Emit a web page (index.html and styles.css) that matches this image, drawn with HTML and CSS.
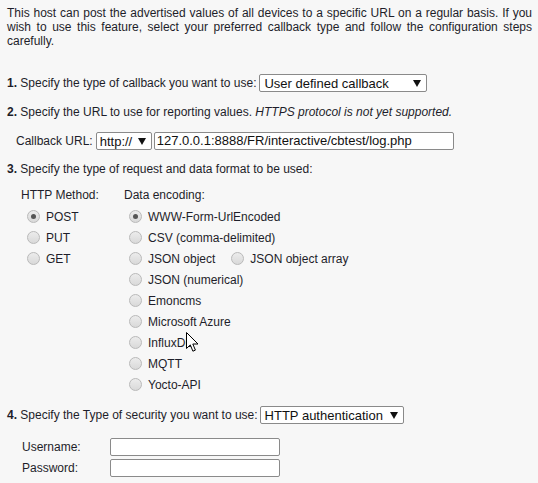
FILE: index.html
```html
<!DOCTYPE html>
<html>
<head>
<meta charset="utf-8">
<link rel="stylesheet" href="styles.css">
</head>
<body>
<div class="page">
  <p class="intro">This host can post the advertised values of all devices to a specific URL on a regular basis. If you wish to use this feature, select your preferred callback type and follow the configuration steps carefully.</p>

  <div class="row step1"><b>1.</b>&nbsp;Specify the type of callback you want to use:<span class="select sel-type"><span>User defined callback</span><svg class="arrow" width="8" height="7" viewBox="0 0 8 7"><polygon points="0,0 8,0 4,7" fill="#111"/></svg></span></div>

  <div class="line step2"><b>2.</b> Specify the URL to use for reporting values. <i>HTTPS protocol is not yet supported.</i></div>

  <div class="row url-row">Callback URL:<span class="select sel-proto"><span>http://</span><svg class="arrow" width="8" height="7" viewBox="0 0 8 7"><polygon points="0,0 8,0 4,7" fill="#111"/></svg></span><span class="textbox url-box">127.0.0.1:8888/FR/interactive/cbtest/log.php</span></div>

  <div class="line step3"><b>3.</b> Specify the type of request and data format to be used:</div>

  <div class="formats">
    <div class="col-method">
      <div class="col-head">HTTP Method:</div>
      <div class="radios">
        <label class="opt"><span class="radio on"></span>POST</label>
        <label class="opt"><span class="radio"></span>PUT</label>
        <label class="opt"><span class="radio"></span>GET</label>
      </div>
    </div>
    <div class="col-data">
      <div class="col-head">Data encoding:</div>
      <div class="radios data">
        <label class="opt"><span class="radio on"></span>WWW-Form-UrlEncoded</label>
        <label class="opt"><span class="radio"></span>CSV (comma-delimited)</label>
        <div class="opt"><span class="radio"></span>JSON object<span class="radio second"></span>JSON object array</div>
        <label class="opt"><span class="radio"></span>JSON (numerical)</label>
        <label class="opt"><span class="radio"></span>Emoncms</label>
        <label class="opt"><span class="radio"></span>Microsoft Azure</label>
        <label class="opt"><span class="radio"></span>InfluxDB</label>
        <label class="opt"><span class="radio"></span>MQTT</label>
        <label class="opt"><span class="radio"></span>Yocto-API</label>
      </div>
    </div>
  </div>

  <div class="row step4"><b>4.</b>&nbsp;Specify the Type of security you want to use:<span class="select sel-sec"><span>HTTP authentication</span><svg class="arrow" width="8" height="7" viewBox="0 0 8 7"><polygon points="0,0 8,0 4,7" fill="#111"/></svg></span></div>

  <div class="creds">
    <div class="row cred"><span class="cred-label">Username:</span><span class="textbox cred-box"></span></div>
    <div class="row cred pw"><span class="cred-label">Password:</span><span class="textbox cred-box"></span></div>
  </div>
</div>

<svg class="cursor" width="13" height="21" viewBox="0 0 13 21">
  <path d="M0.5,0.5 L0.5,16.5 L4.3,12.9 L6.9,19.2 L9.4,18.1 L6.8,12 L12,12 Z" fill="#fff" stroke="#000" stroke-width="1" stroke-linejoin="miter"/>
</svg>
</body>
</html>
```

FILE: styles.css
```css
html, body {
  margin: 0;
  padding: 0;
  background: #f7f7f7;
}
body {
  font-family: "Liberation Sans", Arial, sans-serif;
  font-size: 12px;
  color: #1e1e2a;
  position: relative;
  width: 538px;
  height: 483px;
  overflow: hidden;
}
.page {
  padding: 0 6px 0 7px;
}
.intro {
  margin: 6px 0 0;
  line-height: 14px;
  text-align: justify;
}
.row {
  display: flex;
  align-items: center;
  height: 18px;
  white-space: nowrap;
}
.line {
  line-height: 14px;
  white-space: nowrap;
}
.step1 { margin-top: 26px; }
.step2 { margin-top: 13px; }
.url-row { margin-top: 13px; padding-left: 9px; }
.step3 { margin-top: 12px; }

.select {
  display: flex;
  align-items: center;
  justify-content: space-between;
  box-sizing: border-box;
  height: 18px;
  background: #fff;
  border: 1px solid #8a8a8a;
  border-radius: 2px;
  font-size: 13px;
  color: #111;
  padding: 0 5px 0 4px;
  margin-left: 3px;
}
.select .arrow { flex: none; }
.sel-type { width: 168px; }
.sel-proto { width: 56px; padding-left: 3px; }
.sel-sec { width: 144px; margin-left: 2px; padding-left: 4px; }

.textbox {
  display: block;
  box-sizing: border-box;
  height: 18px;
  background: #fff;
  border: 1px solid #8a8a8a;
  border-radius: 2px;
  font-size: 13px;
  line-height: 16px;
  color: #111;
  padding: 0 3px;
}
.url-box { width: 300px; margin-left: 2px; padding-left: 2px; }

.formats {
  display: flex;
  margin-top: 12px;
  padding-left: 14px;
}
.col-method { width: 103px; }
.col-head { line-height: 14px; }
.radios {
  margin-top: 4px;
  padding-left: 6px;
}
.radios.data { padding-left: 5px; }
.opt {
  display: flex;
  align-items: center;
  height: 21px;
}
.radio {
  flex: none;
  box-sizing: border-box;
  width: 13px;
  height: 13px;
  border-radius: 50%;
  border: 1px solid #b9b9b9;
  background: linear-gradient(#ececec, #d9d9d9);
  margin-right: 6px;
  position: relative;
}
.radio.on::after {
  content: "";
  position: absolute;
  left: 3px;
  top: 3px;
  width: 5px;
  height: 5px;
  border-radius: 50%;
  background: #555;
}
.radio.second { margin-left: 16px; }

.step4 { margin-top: 11px; }
.creds { margin-top: 14px; padding-left: 15px; }
.cred-label { width: 88px; }
.cred-box { width: 170px; }
.cred.pw { margin-top: 3px; }

.cursor {
  position: absolute;
  left: 186px;
  top: 332px;
}
```
